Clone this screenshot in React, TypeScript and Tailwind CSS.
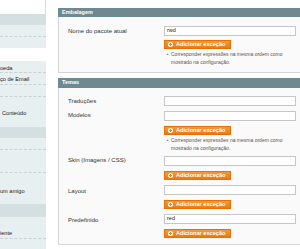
import React from "react";

const font = { fontFamily: '"Liberation Sans", Arial, sans-serif' };

function Input({ value = "" }: { value?: string }) {
  return (
    <div className="w-[132px] h-[10px] border border-[#c6c6c6] bg-white flex items-center pl-[2px] text-[5.5px] leading-none text-[#222]">
      {value}
    </div>
  );
}

function AddButton() {
  return (
    <div className="w-[67px] h-[9px] bg-gradient-to-b from-[#f59a3a] to-[#ea7a0c] border border-[#e86f00] flex items-center pl-[3px] gap-[3px]">
      <div className="w-[5px] h-[5px] rounded-full bg-white flex items-center justify-center relative">
        <div className="absolute w-[3px] h-[1px] bg-[#ef7f10]" />
        <div className="absolute w-[1px] h-[3px] bg-[#ef7f10]" />
      </div>
      <span className="text-[5.6px] leading-none font-bold text-white whitespace-nowrap">Adicionar exceção</span>
    </div>
  );
}

function Note() {
  return (
    <div className="flex mt-[2px] text-[5px] leading-[7.5px] text-[#555]">
      <span className="w-[7px] pl-[2px] text-[3px] text-[#777]">▲</span>
      <span className="w-[115px]">Corresponder expressões na mesma ordem como mostrado na configuração.</span>
    </div>
  );
}

function Label({ children, top }: { children: React.ReactNode; top: string }) {
  return (
    <div className={`w-[105px] pl-[9px] text-[6px] leading-none text-[#333] whitespace-nowrap ${top}`}>{children}</div>
  );
}

function SideRow({ text, h, pt, last }: { text?: string; h: string; pt?: string; last?: boolean }) {
  return (
    <div className={`${h} ${pt ?? "pt-[3px]"} bg-[#e7eff0] ${last ? "" : "border-b border-dashed border-[#c9d2d4]"} text-[5.6px] leading-[6px] text-[#222] whitespace-nowrap overflow-hidden`}>
      {text}
    </div>
  );
}

export default function App() {
  return (
    <div className="w-[300px] h-[249px] overflow-hidden bg-white flex" style={font}>
      {/* sidebar */}
      <div className="w-[46px] flex flex-col shrink-0">
        <div className="h-[15px] bg-white border-r border-b border-[#d6dcdd]" />
        <div className="h-[10px] bg-[#d3dfe0]" />
        <SideRow h="h-[12px]" />
        <SideRow h="h-[11px]" last />
        <div className="h-[13px] bg-white" />
        <SideRow h="h-[12px]" text="oeda" pt="pt-[4px]" />
        <SideRow h="h-[12px]" text="ço de Email" pt="pt-[3px]" />
        <SideRow h="h-[12px]" />
        <SideRow h="h-[30px]" text="  Conteúdo" pt="pt-[13px] pl-[2px]" last />
        <div className="h-[11px] bg-[#d3dfe0]" />
        <SideRow h="h-[12px]" />
        <SideRow h="h-[23px]" />
        <SideRow h="h-[31px]" text="um amigo" pt="pt-[15px]" last />
        <div className="h-[13px] bg-[#d3dfe0]" />
        <SideRow h="h-[22px]" text="iente" pt="pt-[13px]" />
        <SideRow h="h-[10px]" last />
      </div>

      <div className="w-[12px] shrink-0" />

      {/* main */}
      <div className="flex-1 flex flex-col pt-[8px]">
        {/* Embalagem */}
        <div className="h-[9px] bg-[#6f8992] pl-[4px] flex items-center text-[5.5px] font-bold text-white leading-none">
          Embalagem
        </div>
        <div className="h-[56px] bg-[#fafafa] border-l border-b border-[#d6d6d6] pt-[9px] flex">
          <Label top="pt-[2px]">Nome do pacote atual</Label>
          <div className="flex flex-col">
            <Input value="rwd" />
            <div className="mt-[4px]">
              <AddButton />
            </div>
            <Note />
          </div>
        </div>

        <div className="h-[5px]" />

        {/* Temas */}
        <div className="h-[10px] bg-[#6f8992] pl-[4px] flex items-center text-[5.5px] font-bold text-white leading-none">
          Temas
        </div>
        <div className="h-[157px] bg-[#fafafa] border-l border-b border-[#d6d6d6] pt-[8px] flex flex-col">
          <div className="flex">
            <Label top="pt-[2px]">Traduções</Label>
            <Input />
          </div>
          <div className="flex mt-[5px]">
            <Label top="pt-[1px]">Modelos</Label>
            <div className="flex flex-col">
              <Input />
              <div className="mt-[5px]">
                <AddButton />
              </div>
              <Note />
            </div>
          </div>
          <div className="flex mt-[4px]">
            <Label top="pt-[1px]">Skin (Imagens / CSS)</Label>
            <div className="flex flex-col">
              <Input />
              <div className="mt-[5px]">
                <AddButton />
              </div>
            </div>
          </div>
          <div className="flex mt-[5px]">
            <Label top="pt-[3px]">Layout</Label>
            <div className="flex flex-col">
              <Input />
              <div className="mt-[5px]">
                <AddButton />
              </div>
            </div>
          </div>
          <div className="flex mt-[5px]">
            <Label top="pt-[3px]">Predefinido</Label>
            <div className="flex flex-col">
              <Input value="red" />
              <div className="mt-[5px]">
                <AddButton />
              </div>
            </div>
          </div>
        </div>
      </div>
    </div>
  );
}
